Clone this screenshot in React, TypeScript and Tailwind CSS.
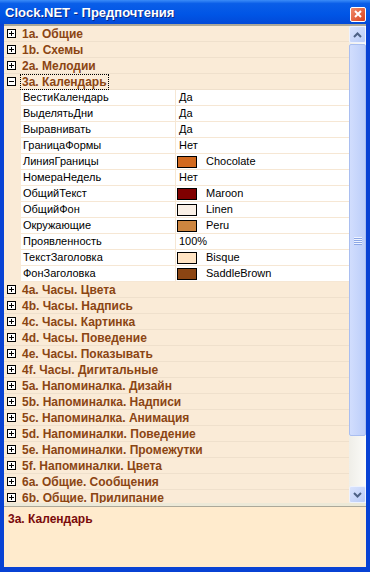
import type { ReactNode } from 'react'

type Prop = { name: string; value: string; color?: string }

const FONT = { fontFamily: '"Liberation Sans", Arial, sans-serif' }

const before = ['1a. Общие', '1b. Схемы', '2a. Мелодии']
const props: Prop[] = [
  { name: 'ВестиКалендарь', value: 'Да' },
  { name: 'ВыделятьДни', value: 'Да' },
  { name: 'Выравнивать', value: 'Да' },
  { name: 'ГраницаФормы', value: 'Нет' },
  { name: 'ЛинияГраницы', value: 'Chocolate', color: '#d2691e' },
  { name: 'НомераНедель', value: 'Нет' },
  { name: 'ОбщийТекст', value: 'Maroon', color: '#800000' },
  { name: 'ОбщийФон', value: 'Linen', color: '#faf0e6' },
  { name: 'Окружающие', value: 'Peru', color: '#cd853f' },
  { name: 'Проявленность', value: '100%' },
  { name: 'ТекстЗаголовка', value: 'Bisque', color: '#ffe4c4' },
  { name: 'ФонЗаголовка', value: 'SaddleBrown', color: '#8b4513' },
]
const after = [
  '4a. Часы. Цвета',
  '4b. Часы. Надпись',
  '4c. Часы. Картинка',
  '4d. Часы. Поведение',
  '4e. Часы. Показывать',
  '4f. Часы. Дигитальные',
  '5a. Напоминалка. Дизайн',
  '5b. Напоминалка. Надписи',
  '5c. Напоминалка. Анимация',
  '5d. Напоминалки. Поведение',
  '5e. Напоминалки. Промежутки',
  '5f. Напоминалки. Цвета',
  '6a. Общие. Сообщения',
  '6b. Общие. Прилипание',
]

// квадратик +/- слева от категории
function ExpandBox({ open }: { open?: boolean }) {
  return (
    <svg width="9" height="9" viewBox="0 0 9 9" className="shrink-0">
      <rect x="0.5" y="0.5" width="8" height="8" fill="#fff" stroke="#000" />
      <path d="M2 4.5h5" stroke="#000" />
      {!open && <path d="M4.5 2v5" stroke="#000" />}
    </svg>
  )
}

function CategoryRow({ title, open, focused }: { title: string; open?: boolean; focused?: boolean }) {
  return (
    <div className="h-[16px] shrink-0 flex items-center bg-[#faebd7] border-b border-[#efe0cc]">
      <div className="w-[17px] flex justify-start pl-[3px]">
        <ExpandBox open={open} />
      </div>
      <span
        className={
          'text-[12px] leading-[14px] font-bold text-[#8b4513] whitespace-nowrap px-[1px] ' +
          (focused ? 'outline-1 outline-dotted outline-black' : '')
        }
      >
        {title}
      </span>
    </div>
  )
}

function PropRow({ p }: { p: Prop }) {
  return (
    <div className="h-[16px] shrink-0 flex bg-[#faebd7]">
      <div className="w-[17px]" />
      <div className="flex-1 flex bg-white border-b border-[#f6e7d4] text-[11px] leading-[15px] text-black">
        <div className="w-[155px] pl-[2px] border-r border-[#f6e7d4] whitespace-nowrap">{p.name}</div>
        <div className="flex-1 flex items-center pl-[1px] whitespace-nowrap">
          {p.color ? (
            <>
              <span className="w-[20px] h-[12px] border border-black" style={{ backgroundColor: p.color }} />
              <span className="ml-[9px]">{p.value}</span>
            </>
          ) : (
            <span className="pl-[2px]">{p.value}</span>
          )}
        </div>
      </div>
    </div>
  )
}

function Arrow({ up }: { up?: boolean }) {
  return (
    <svg width="9" height="6" viewBox="0 0 9 6">
      <path d={up ? 'M1 5L4.5 1.5L8 5' : 'M1 1L4.5 4.5L8 1'} fill="none" stroke="#4d6185" strokeWidth="2" />
    </svg>
  )
}

function ScrollButton({ children }: { children: ReactNode }) {
  return (
    <div className="h-[17px] shrink-0 flex items-center justify-center rounded-[2px] border border-[#eef2fd] bg-[linear-gradient(135deg,#d9e3fd,#b9cbf7)]">
      {children}
    </div>
  )
}

function ScrollBar() {
  return (
    <div className="w-[17px] shrink-0 flex flex-col bg-[linear-gradient(90deg,#efeee8,#fbfbf8)]">
      <ScrollButton>
        <Arrow up />
      </ScrollButton>
      <div className="h-[392px] shrink-0 mt-[1px] flex items-center justify-center rounded-[2px] border border-[#a9bef0] bg-[linear-gradient(90deg,#d1ddfd,#bccefa)]">
        <div className="flex flex-col gap-[1px]">
          {[0, 1, 2, 3].map((i) => (
            <div key={i} className="w-[8px] h-[1px] bg-[#eef3fe] shadow-[0_1px_0_#8ca7e6]" />
          ))}
        </div>
      </div>
      <div className="flex-1" />
      <ScrollButton>
        <Arrow />
      </ScrollButton>
    </div>
  )
}

export default function App() {
  return (
    <div className="w-[370px] h-[572px] flex flex-col bg-[#0842d4] overflow-hidden" style={FONT}>
      {/* заголовок окна */}
      <div className="h-[24px] shrink-0 flex items-center pl-[5px] pr-[4px] bg-[linear-gradient(180deg,#3b8cf8_0%,#0a5ee8_15%,#0055e6_60%,#0249d8_100%)]">
        <span className="flex-1 text-white font-bold text-[13px] leading-none whitespace-nowrap [text-shadow:1px_1px_0_#0a2a8a]">
          Clock.NET - Предпочтения
        </span>
        <div className="w-[16px] h-[15px] mt-[4px] flex items-center justify-center rounded-[2px] border border-white bg-[linear-gradient(135deg,#f08a6a,#d9431f)]">
          <svg width="8" height="8" viewBox="0 0 8 8">
            <path d="M1 1L7 7M7 1L1 7" stroke="#fff" strokeWidth="2" />
          </svg>
        </div>
      </div>

      <div className="flex-1 flex flex-col mx-[4px] mb-[5px] bg-[#ece9d8] min-h-0">
        <div className="h-[479px] shrink-0 flex border-t-2 border-[#aca899]">
          <div className="flex-1 flex flex-col overflow-hidden bg-[#faebd7]">
            {before.map((t) => (
              <CategoryRow key={t} title={t} />
            ))}
            <CategoryRow title="3a. Календарь" open focused />
            {props.map((p) => (
              <PropRow key={p.name} p={p} />
            ))}
            {after.map((t) => (
              <CategoryRow key={t} title={t} />
            ))}
          </div>
          <ScrollBar />
        </div>
        <div className="h-[3px] shrink-0" />
        <div className="flex-1 border-t border-[#aca899] bg-[#ffebcd] px-[4px] pt-[5px]">
          <div className="text-[12px] leading-[14px] font-bold text-[#7a0a0a]">3a. Календарь</div>
        </div>
      </div>
    </div>
  )
}
